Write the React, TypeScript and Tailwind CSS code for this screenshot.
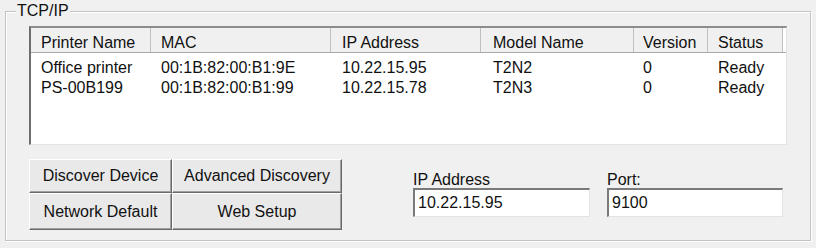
import React from "react";

const cols = [
  { label: "Printer Name", w: "w-[120px]", pl: "pl-[10px]" },
  { label: "MAC", w: "w-[180px]", pl: "pl-[10px]" },
  { label: "IP Address", w: "w-[150px]", pl: "pl-[11px]" },
  { label: "Model Name", w: "w-[153px]", pl: "pl-[12px]" },
  { label: "Version", w: "w-[74px]", pl: "pl-[9px]" },
  { label: "Status", w: "w-[75px]", pl: "pl-[10px]" },
];

const rows = [
  ["Office printer", "00:1B:82:00:B1:9E", "10.22.15.95", "T2N2", "0", "Ready"],
  ["PS-00B199", "00:1B:82:00:B1:99", "10.22.15.78", "T2N3", "0", "Ready"],
];

function Btn({ label, w, h }: { label: string; w: string; h: string }) {
  return (
    <button
      className={`${w} ${h} flex items-center justify-center bg-[#e9e9e9] border border-t-white border-l-white border-r-[#696969] border-b-[#696969] shadow-[inset_-1px_-1px_0_#a0a0a0] text-[16px] leading-[18px] text-[#111]`}
    >
      {label}
    </button>
  );
}

function Field({ label, value, w }: { label: string; value: string; w: string }) {
  return (
    <div className={`${w} flex flex-col`}>
      <div className="leading-[16px] text-[16px] text-[#111]">{label}</div>
      <input
        readOnly
        value={value}
        className="h-[29px] w-full bg-white border-t-2 border-l-2 border-t-[#7a7a7a] border-l-[#7a7a7a] border-r border-b border-r-[#e3e3e3] border-b-[#e3e3e3] pl-[3px] text-[16px] text-[#111] outline-none"
        style={{ fontFamily: "'Liberation Sans', Arial, sans-serif" }}
      />
    </div>
  );
}

export default function App() {
  return (
    <div
      className="w-[816px] h-[248px] bg-[#f0f0f0] pl-[5px] pt-[2px] overflow-hidden text-[#111]"
      style={{ fontFamily: "'Liberation Sans', Arial, sans-serif" }}
    >
      <fieldset className="w-[806px] h-[239px] border border-[#c4c4c4] shadow-[1px_1px_0_#ffffff,inset_1px_1px_0_#ffffff] pl-[23px] pt-[6px] m-0">
        <legend className="-ml-[13px] px-[1px] text-[16px] leading-[18px] bg-[#f0f0f0]">TCP/IP</legend>

        <div className="w-[758px] h-[119px] bg-white border-t-2 border-l-2 border-t-[#8c8c8c] border-l-[#6e6e6e] border-r border-b border-r-[#e3e3e3] border-b-[#e3e3e3] flex flex-col">
          <div className="flex h-[25px] bg-[#f0f0f0] border-b border-b-[#a8a8a8]">
            {cols.map((c) => (
              <div
                key={c.label}
                className={`${c.w} ${c.pl} shrink-0 h-full border-r border-r-[#c0c0c0] pt-[5px] leading-[20px] text-[16px] whitespace-nowrap overflow-hidden`}
              >
                {c.label}
              </div>
            ))}
            <div className="flex-1 bg-white" />
          </div>
          <div className="pt-[5px]">
            {rows.map((r, i) => (
              <div key={i} className="flex h-[20px]">
                {r.map((cell, j) => (
                  <div
                    key={j}
                    className={`${cols[j].w} ${cols[j].pl} shrink-0 leading-[20px] text-[16px] whitespace-nowrap`}
                  >
                    {cell}
                  </div>
                ))}
              </div>
            ))}
          </div>
        </div>

        <div className="flex items-start mt-[14px]">
          <div className="grid grid-cols-[143px_170px] grid-rows-[34px_37px]">
            <Btn label="Discover Device" w="w-[143px]" h="h-[34px]" />
            <Btn label="Advanced Discovery" w="w-[170px]" h="h-[34px]" />
            <Btn label="Network Default" w="w-[143px]" h="h-[37px]" />
            <Btn label="Web Setup" w="w-[170px]" h="h-[37px]" />
          </div>
          <div className="flex ml-[71px] pt-[13px] gap-[17px]">
            <Field label="IP Address" value="10.22.15.95" w="w-[177px]" />
            <Field label="Port:" value="9100" w="w-[176px]" />
          </div>
        </div>
      </fieldset>
    </div>
  );
}
